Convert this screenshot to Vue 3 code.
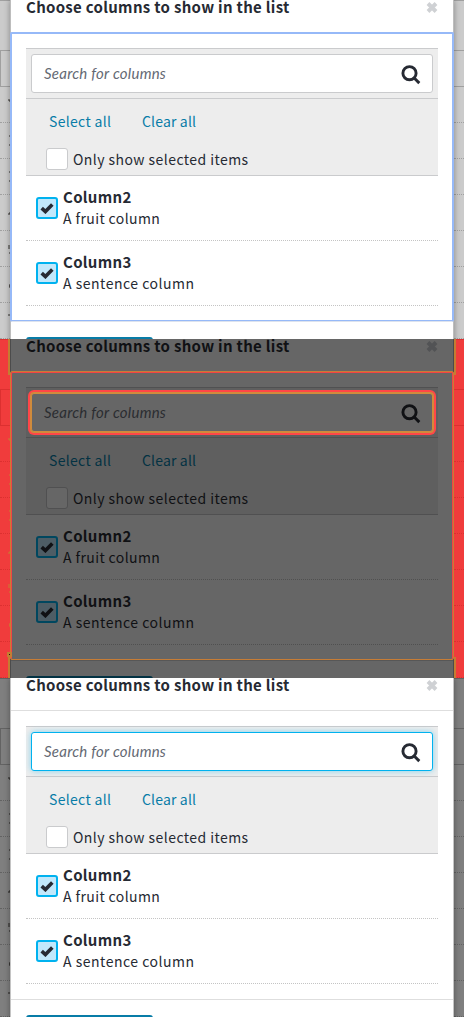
<script setup>
const panels = ['selected', 'compare', 'focused']
const marks = [
  'M0 13H2M1 14H2',
  'M1 13H2M1 22H2',
  'M1 13H2M1 22H2',
  'M1 18H2M0 19H2',
  'M1 14V18M1 22H2',
  'M1 18H2M1 19H2M1 20H2',
  'M0 12H2',
]
const columns = [
  { name: 'Column2', description: 'A fruit column', kind: 'fruit' },
  { name: 'Column3', description: 'A sentence column', kind: 'sentence' },
]
</script>

<template>
  <main class="page">
    <section v-for="panel in panels" :key="panel" class="panel" :class="panel">
      <div class="strip left">
        <div class="lead"></div>
        <div class="head"></div>
        <div v-for="(mark, i) in marks" :key="i" class="line">
          <svg class="mark" viewBox="0 0 2 35"><path :d="mark" /></svg>
        </div>
      </div>
      <div class="dialog">
        <header class="header">
          <h2 class="title">Choose columns to show in the list</h2>
          <svg class="close" viewBox="0 0 12 11">
            <path d="M2 1.5L10 9.5M10 1.5L2 9.5" />
          </svg>
        </header>
        <div class="body">
          <div class="toolbar">
            <div class="search-row">
              <div class="search">
                <span class="placeholder">Search for columns</span>
                <svg class="glass" viewBox="0 0 20 20">
                  <circle cx="8.5" cy="8.2" r="6.6" />
                  <path d="M13.2 13L18.3 18.1" />
                </svg>
              </div>
            </div>
            <div class="links">
              <span class="select">Select all</span>
              <span class="clear">Clear all</span>
            </div>
            <div class="only">
              <i class="box"></i>
              <span class="only-text">Only show selected items</span>
            </div>
          </div>
          <div v-for="column in columns" :key="column.name" class="item">
            <i class="box checked">
              <svg class="check" viewBox="0 0 14 12">
                <path d="M1.7 6.2L5.4 9.6L12.3 2.6" />
              </svg>
            </i>
            <div class="labels">
              <strong class="name">{{ column.name }}</strong>
              <span class="desc" :class="column.kind">{{ column.description }}</span>
            </div>
          </div>
        </div>
        <footer class="footer"><div class="button"></div></footer>
      </div>
      <div class="strip right">
        <div class="lead"></div>
        <div class="head"></div>
        <div v-for="(mark, i) in marks" :key="i" class="line"></div>
      </div>
      <div v-if="panel !== 'focused'" class="ring"></div>
      <template v-if="panel === 'compare'">
        <div class="edges top"></div>
        <div class="edges bottom"></div>
        <div class="edges dot"></div>
      </template>
    </section>
  </main>
</template>

<style>
body { margin: 0; }
</style>

<style scoped>
* { box-sizing: border-box; }
.page {
  width: 464px;
  font-family: "Noto Sans CJK SC", "Noto Sans", sans-serif;
  font-size: 14px;
}
.panel {
  --paper: #fff;
  --tool: #ededed;
  --rule: #cacbcd;
  --dots: #c4c4c4;
  --ink: #262a33;
  --link: #087ca7;
  --field: #fff;
  --accent: #00b2ef;
  --tint: #c2e8fb;
  --btn: #087ca7;
  --edge: #bdbdbd;
  --divide: #dedede;
  --hint: #646973;
  --x: #cfd1d4;
  --back: #cbcbcb;
  --grid: #a0a0a0;
  --digit: #33302c;
  position: relative;
  display: flex;
  height: 339px;
  overflow: hidden;
}
.compare {
  --paper: #666;
  --tool: #5f5f5f;
  --rule: #505051;
  --dots: #505050;
  --ink: #101114;
  --link: #033243;
  --field: #666;
  --accent: #00475f;
  --tint: #4e5d65;
  --btn: #033243;
  --edge: #4c4c4c;
  --divide: #575757;
  --hint: #2b2d31;
  --x: #525355;
  --back: #f03c3c;
  --grid: #dc3030;
  --digit: #c48031;
}
.focused {
  --back: #7f7f7f;
  --grid: #636363;
  --digit: #242220;
  --edge: #c4c4c4;
}
.strip {
  width: 10px;
  flex: none;
  overflow: hidden;
  background: var(--back);
}
.lead { height: 51px; border-top: 1px solid var(--grid); border-bottom: 1px solid var(--grid); }
.head { height: 36px; border-bottom: 1px solid var(--grid); }
.left .head { border-left: 1px solid var(--grid); }
.line {
  display: flex;
  height: 36px;
  padding-left: 8px;
  border-bottom: 1px dotted var(--grid);
}
.mark { width: 2px; height: 35px; fill: none; stroke: var(--digit); stroke-width: 1; }
.dialog {
  position: relative;
  width: 444px;
  height: 360px;
  flex: none;
  background: var(--paper);
  border: solid var(--edge);
  border-width: 0 1px;
  box-shadow: 0 0 6px rgba(0, 0, 0, .35);
}
.compare .dialog { box-shadow: none; }
.header {
  display: flex;
  justify-content: space-between;
  height: 33px;
  padding: 0 15px;
  border-bottom: 1px solid var(--divide);
}
.title { margin: -5px 0 0; font-size: 15px; line-height: 23px; color: var(--ink); white-space: nowrap; letter-spacing: .3px; }
.close { width: 12px; height: 11px; margin: 2px 0 0; fill: none; stroke: var(--x); stroke-width: 3.9; }
.body { height: 288px; padding: 15px 15px 0; }
.toolbar { height: 128px; background: var(--tool); border: solid var(--rule); border-width: 1px 0; }
.search-row { height: 50px; padding: 5px; border-bottom: 1px solid var(--rule); }
.search {
  display: flex;
  align-items: center;
  justify-content: space-between;
  width: 402px;
  height: 39px;
  padding: 0 11px 0 12px;
  background: var(--field);
  border: 1px solid var(--rule);
  border-radius: 3px;
}
.focused .search { border-color: #00b2ef; box-shadow: 0 0 6px rgba(0, 178, 239, .45); }
.compare .search { border-color: #d08b3c; box-shadow: 0 0 0 1px #d08b3c, 0 0 0 3px #ff4648; }
.placeholder { margin-bottom: 1px; font-family: Lato, sans-serif; font-size: 15px; font-style: italic; letter-spacing: .24px; color: var(--hint); white-space: nowrap; }
.glass { width: 20px; height: 20px; fill: none; stroke: var(--ink); stroke-width: 2.9; margin-top: 2px; }
.links { display: flex; height: 46px; padding: 11px 0 0 23px; line-height: 22px; color: var(--link); }
.select { width: 93px; letter-spacing: .32px; }
.clear { letter-spacing: .16px; }
.only-text { letter-spacing: .44px; }
.fruit { letter-spacing: .4px; }
.sentence { letter-spacing: .52px; }
.links span, .only-text, .desc { white-space: nowrap; }
.only { display: flex; align-items: center; height: 30px; padding: 0 0 0 20px; gap: 5px; color: var(--ink); margin-top: -1px; }
.box {
  display: flex;
  align-items: center;
  justify-content: center;
  flex: none;
  width: 22px;
  height: 22px;
  background: var(--field);
  border: 1px solid var(--rule);
  border-radius: 3px;
}
.box.checked { background: var(--tint); border: 2px solid var(--accent); }
.check { width: 14px; height: 12px; flex: none; fill: none; stroke: var(--ink); stroke-width: 3.6; }
.item { display: flex; height: 65px; padding: 10px 0 0 10px; gap: 5px; border-bottom: 1px dotted var(--dots); }
.item .box { margin-top: 11px; }
.labels { display: flex; flex-direction: column; color: var(--ink); }
.name { font-size: 15px; line-height: 22px; letter-spacing: .3px; }
.desc { line-height: 20px; }
.footer { padding: 15px 15px 0; border-top: 1px solid var(--divide); }
.button { width: 127px; height: 34px; border-radius: 3px; background: var(--btn); }
.ring {
  position: absolute;
  top: 32px;
  left: 10px;
  width: 444px;
  height: 290px;
  border: 2px solid #96b9f8;
  border-radius: 2px;
}
.selected .ring { border-bottom: 1px solid #dde3ee; box-shadow: inset 0 -1px 0 #96b9f8; }
.compare .ring { border: 1px solid #c77d36; height: 289px; box-shadow: inset 1px 1px 0 #f34444, inset -1px 0 0 #f34444; }
.edges { position: absolute; left: 8px; width: 448px; border: solid #c47d32; border-width: 0 2px; }
.edges.top { top: 0; height: 36px; }
.edges.bottom { top: 318px; height: 21px; }
.edges.dot { top: 313px; left: 7px; width: 5px; height: 5px; border-width: 2px; background: #24160a; }
</style>
